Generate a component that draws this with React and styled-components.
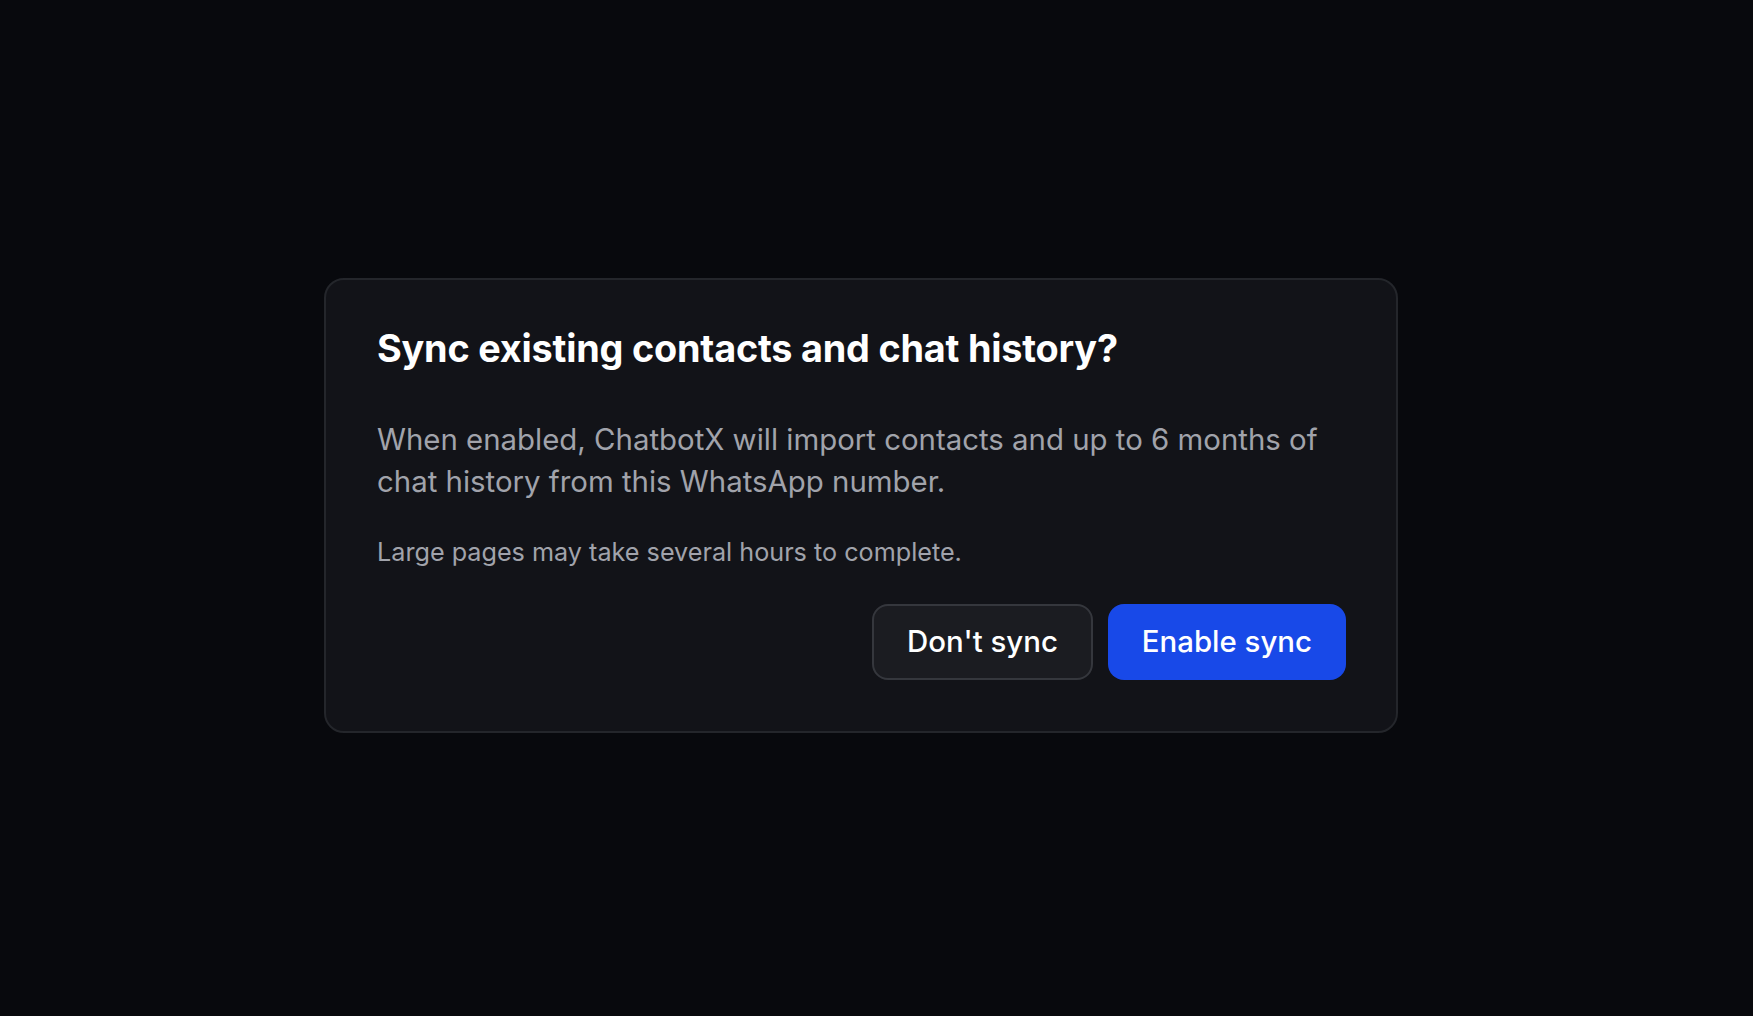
import styled, { createGlobalStyle } from "styled-components";

const GlobalStyle = createGlobalStyle`
  html, body {
    margin: 0;
    padding: 0;
    background: #08090d;
  }
  body {
    font-family: Inter, "Noto Sans", sans-serif;
    -webkit-font-smoothing: antialiased;
  }
`;

const Page = styled.div`
  min-height: 100vh;
  box-sizing: border-box;
  display: flex;
  align-items: center;
  padding: 0 0 6px 324px;
`;

const Dialog = styled.div`
  width: 1074px;
  box-sizing: border-box;
  padding: 42px 50px 51px 51px;
  background: #121318;
  border: 2px solid #24262b;
  border-radius: 20px;
  color: #f5f5f7;
`;

const Title = styled.h2`
  margin: 0;
  font-size: 37.8px;
  line-height: 52px;
  font-weight: 700;
  letter-spacing: -0.2px;
  color: #ffffff;
`;

const Body = styled.p`
  margin: 45px 0 0;
  font-size: 29.4px;
  line-height: 42px;
  font-weight: 400;
  color: #a1a3ab;
`;

const Note = styled.p`
  margin: 32px 0 0;
  font-size: 25.2px;
  line-height: 34px;
  color: #a1a3ab;
`;

const Actions = styled.div`
  display: flex;
  justify-content: flex-end;
  gap: 15px;
  margin-top: 35px;
`;

const Button = styled.button`
  height: 76px;
  padding: 0 ${(p) => (p.$primary ? "34px" : "33px")};
  border-radius: 16px;
  font-family: inherit;
  font-size: 29.4px;
  font-weight: 500;
  cursor: pointer;
  border: ${(p) => (p.$primary ? "none" : "2px solid #35373d")};
  background: ${(p) => (p.$primary ? "#1849e8" : "#1b1c21")};
  color: #ffffff;
`;

export default function App() {
  return (
    <>
      <GlobalStyle />
      <Page>
        <Dialog role="dialog">
          <Title>Sync existing contacts and chat history?</Title>
          <Body>
            When enabled, ChatbotX will import contacts and up to 6 months of
            chat history from this WhatsApp number.
          </Body>
          <Note>Large pages may take several hours to complete.</Note>
          <Actions>
            <Button>Don't sync</Button>
            <Button $primary>Enable sync</Button>
          </Actions>
        </Dialog>
      </Page>
    </>
  );
}
